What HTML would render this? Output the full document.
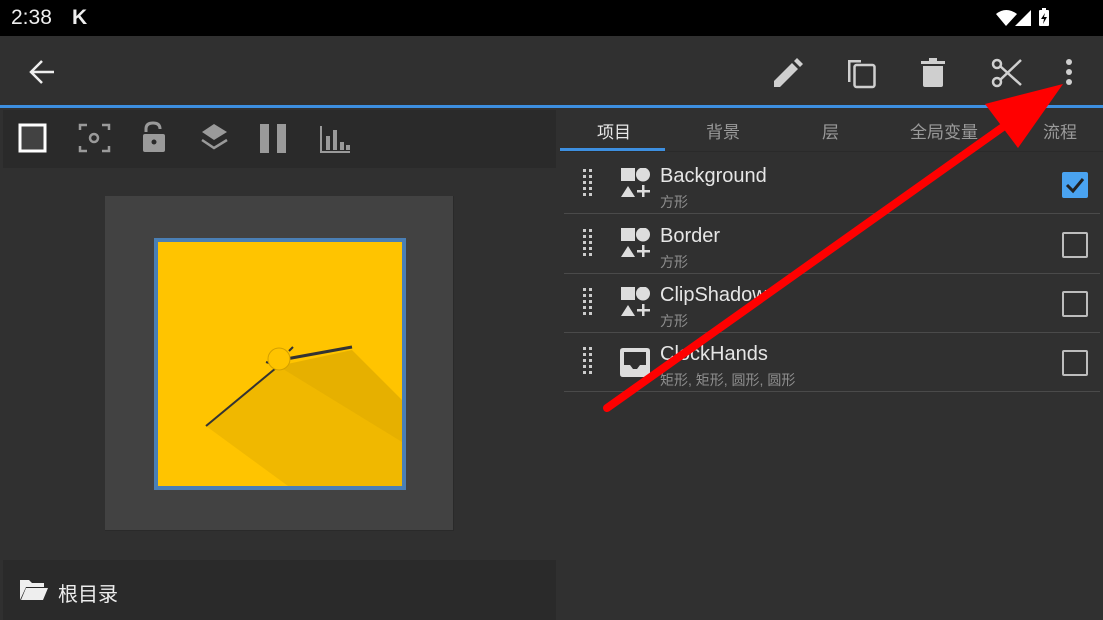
<!DOCTYPE html>
<html><head><meta charset="utf-8"><style>
*{margin:0;padding:0;box-sizing:border-box}
body{width:1103px;height:620px;overflow:hidden;background:#303030;font-family:"Liberation Sans","Noto Sans CJK SC",sans-serif;position:relative}
.abs{position:absolute}
.tab{position:absolute;top:118px;font-size:17px;color:#9a9a9a}
.row{position:absolute;left:564px;width:536px;height:59px;border-bottom:1px solid #4a4a4a}
.title{position:absolute;left:96px;top:10px;font-size:20px;color:#e6e6e6}
.sub{position:absolute;left:96px;top:37px;font-size:14px;color:#8e8e8e}
.cb{position:absolute;left:498px;top:17px;width:26px;height:26px;border:2px solid #bdbdbd;border-radius:2px}
</style></head><body>
<div class="abs" style="left:0;top:0;width:1103px;height:36px;background:#000"></div>
<div class="abs" style="left:11px;top:6px;font-size:21px;color:#eee">2:38</div>
<div class="abs" style="left:72px;top:6px;font-size:21px;color:#eee;font-weight:bold">K</div>
<svg class="abs" style="left:990px;top:6px" width="80" height="24">
<path d="M6 8 Q16 0 27 8 L16 20 Z" fill="#fff"/><path d="M41 4 V20 H25 Z" fill="#fff"/>
<rect x="49" y="4" width="10" height="16" rx="1" fill="#fff"/><rect x="52" y="2" width="4" height="3" fill="#fff"/><path d="M55 7 L51 13 H54 L53 18 L57 11 H54 Z" fill="#000"/>
</svg>
<svg class="abs" style="left:28px;top:58px" width="28" height="28"><path d="M26 14H4M14 3L3 14L14 25" stroke="#eee" stroke-width="2.5" fill="none"/></svg>
<svg class="abs" style="left:770px;top:55px" width="340" height="36" fill="#cfcfcf">
<path d="M4 32 L4 26 L22 8 L28 14 L10 32 Z M24 6 L27 3 L33 9 L30 12 Z"/>
<path d="M78 5 H91 V7.5 H80.5 V27 H78 Z"/><rect x="84.5" y="10" width="20" height="22" rx="2" fill="none" stroke="#cfcfcf" stroke-width="2.5"/>
<rect x="151" y="6" width="24" height="3"/><rect x="159" y="3" width="8" height="4"/><path d="M153 11 H173 V30 Q173 32 171 32 H155 Q153 32 153 30 Z"/>
<g stroke="#cfcfcf" stroke-width="2.5" fill="none"><circle cx="227" cy="27" r="4"/><circle cx="227" cy="9" r="4"/><path d="M230 25 L251 5 M230 11 L251 30"/></g>
<circle cx="299" cy="7" r="3"/><circle cx="299" cy="17" r="3"/><circle cx="299" cy="27" r="3"/>
</svg>
<div class="abs" style="left:0;top:105px;width:1103px;height:3px;background:#3d8fe0"></div>
<div class="abs" style="left:3px;top:110px;width:553px;height:58px;background:#2a2a2a"></div>
<svg class="abs" style="left:15px;top:120px" width="345" height="40">
<rect x="5" y="5" width="25" height="26" fill="#424242" stroke="#fff" stroke-width="3"/>
<g stroke="#9a9a9a" stroke-width="2.5" fill="none"><path d="M65 10V5H72M87 5H94V10M94 26V31H87M72 31H65V26"/><circle cx="79" cy="18" r="4"/></g>
<path d="M131 12V9Q131 3 138 3Q145 3 145 9" stroke="#9a9a9a" stroke-width="3" fill="none"/><rect x="128" y="14" width="22" height="18" rx="2" fill="#9a9a9a"/><circle cx="139" cy="22" r="2.5" fill="#2a2a2a"/>
<path d="M187 12 L199 4 L212 12 L199 20 Z" fill="#9a9a9a"/><path d="M187 20 L199 28 L212 20" stroke="#9a9a9a" stroke-width="2.5" fill="none"/>
<rect x="245" y="4" width="9" height="29" fill="#9a9a9a"/><rect x="262" y="4" width="9" height="29" fill="#9a9a9a"/>
<g fill="#9a9a9a"><rect x="305" y="6" width="2" height="27"/><rect x="305" y="31" width="30" height="2"/><rect x="311" y="16" width="4" height="14"/><rect x="318" y="10" width="4" height="20"/><rect x="325" y="22" width="4" height="8"/><rect x="331" y="25" width="4" height="5"/></g>
</svg>
<div class="abs" style="left:105px;top:196px;width:349px;height:335px;background:#424242;border-right:1px solid #2a2a2a;border-bottom:1px solid #2a2a2a"></div>
<div class="abs" style="left:154px;top:238px;width:252px;height:252px;background:#ffc400;border:4px solid #4a7fb5;overflow:hidden">
<svg width="244" height="244" class="abs" style="left:0;top:0">
<polygon points="48,184 120,124 194,108 244,158 244,244 130,244" fill="#000" opacity="0.06"/>
<polygon points="120,124 194,108 244,158 244,200" fill="#000" opacity="0.04"/>
<line x1="48" y1="184" x2="118" y2="126" stroke="#333" stroke-width="2"/>
<line x1="128" y1="117" x2="194" y2="105" stroke="#333" stroke-width="3"/>
<line x1="108" y1="120" x2="114" y2="122" stroke="#333" stroke-width="2"/>
<line x1="131" y1="109" x2="135" y2="105" stroke="#333" stroke-width="2"/>
<circle cx="121" cy="117" r="11" fill="#ffc400" stroke="#d4a000" stroke-width="1"/>
</svg></div>
<div class="abs" style="left:3px;top:560px;width:553px;height:60px;background:#2a2a2a"></div>
<svg class="abs" style="left:19px;top:578px" width="30" height="24"><path d="M1 2H10L13 5H25V9H7L1 22Z M7 10H29L24 22H2Z" fill="#eee"/></svg>
<div class="abs" style="left:58px;top:578px;font-size:20px;color:#eee">根目录</div>
<div class="tab" style="left:597px;color:#e8e8e8">项目</div>
<div class="tab" style="left:706px">背景</div>
<div class="tab" style="left:822px">层</div>
<div class="tab" style="left:910px">全局变量</div>
<div class="tab" style="left:1043px">流程</div>
<div class="abs" style="left:560px;top:148px;width:105px;height:3px;background:#3d8fe0"></div>
<div class="abs" style="left:560px;top:151px;width:543px;height:1px;background:#2a2a2a"></div>
<svg width="0" height="0" style="position:absolute"><defs>
<g id="dr" fill="#ccc"><rect x="0" y="0" width="3" height="3"/><rect x="6" y="0" width="3" height="3"/><rect x="0" y="6" width="3" height="3"/><rect x="6" y="6" width="3" height="3"/><rect x="0" y="12" width="3" height="3"/><rect x="6" y="12" width="3" height="3"/><rect x="0" y="18" width="3" height="3"/><rect x="6" y="18" width="3" height="3"/><rect x="0" y="24" width="3" height="3"/><rect x="6" y="24" width="3" height="3"/></g>
<g id="sh" fill="#ddd"><rect x="0" y="0" width="14" height="13"/><circle cx="22" cy="6.5" r="7"/><path d="M0 29L7 18L14 29Z"/><rect x="16" y="22" width="13" height="2.5"/><rect x="21" y="17" width="2.5" height="12"/></g>
</defs></svg>
<div class="row" style="top:155px"><svg class="abs" style="left:19px;top:14px" width="10" height="28"><use href="#dr"/></svg><svg class="abs" style="left:57px;top:13px" width="32" height="32"><use href="#sh"/></svg><div class="title">Background</div><div class="sub">方形</div><div class="cb" style="background:#4aa3f0;border-color:#4aa3f0"><svg width="22" height="22"><path d="M3 11L9 17L19 5" stroke="#222" stroke-width="3" fill="none"/></svg></div></div>
<div class="row" style="top:215px"><svg class="abs" style="left:19px;top:14px" width="10" height="28"><use href="#dr"/></svg><svg class="abs" style="left:57px;top:13px" width="32" height="32"><use href="#sh"/></svg><div class="title">Border</div><div class="sub">方形</div><div class="cb"></div></div>
<div class="row" style="top:274px"><svg class="abs" style="left:19px;top:14px" width="10" height="28"><use href="#dr"/></svg><svg class="abs" style="left:57px;top:13px" width="32" height="32"><use href="#sh"/></svg><div class="title">ClipShadow</div><div class="sub">方形</div><div class="cb"></div></div>
<div class="row" style="top:333px"><svg class="abs" style="left:19px;top:14px" width="10" height="28"><use href="#dr"/></svg><svg class="abs" style="left:56px;top:14px" width="32" height="32"><path d="M3 1H27Q30 1 30 4V27Q30 30 27 30H3Q0 30 0 27V4Q0 1 3 1Z M4 5V18H10L13 22H17L20 18H26V5Z" fill="#ddd" fill-rule="evenodd"/></svg><div class="title">ClockHands</div><div class="sub">矩形, 矩形, 圆形, 圆形</div><div class="cb"></div></div>
<svg class="abs" style="left:0;top:0" width="1103" height="620"><line x1="607" y1="408" x2="1010" y2="122" stroke="#ff0000" stroke-width="8" stroke-linecap="round"/><polygon points="1063,84 985,104 1018,148" fill="#ff0000"/></svg>
</body></html>
